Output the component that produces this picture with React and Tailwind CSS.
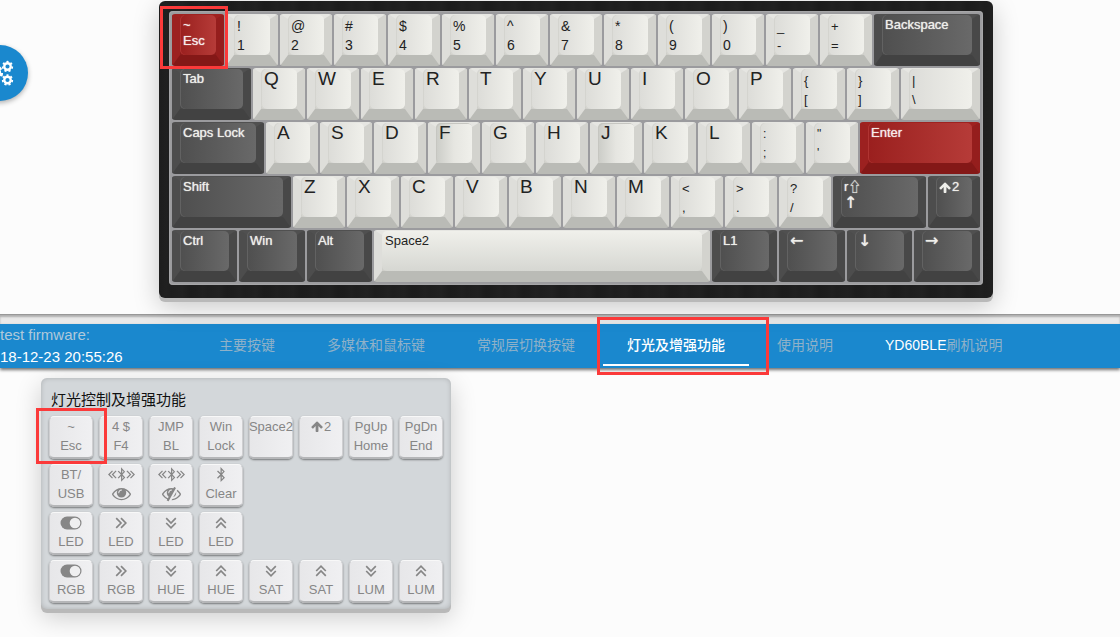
import React from "react";
import { FaBluetoothB } from "react-icons/fa";

const ARROW_UP =
  "M1611 971q0 51-37 90l-75 75q-38 38-91 38-54 0-90-38l-294-293v704q0 52-37.5 84.5t-90.5 32.5h-128q-53 0-90.5-32.5t-37.5-84.5v-704l-294 293q-36 38-90 38t-90-38l-75-75q-38-38-38-90 0-53 38-91l651-651q35-37 90-37 54 0 91 37l651 651q37 39 37 91z";
const EYE =
  "M1664 960q-152-236-381-353 61 104 61 225 0 185-131.5 316.5t-316.5 131.5-316.5-131.5-131.5-316.5q0-121 61-225-229 117-381 353 133 205 333.5 326.5t434.5 121.5 434.5-121.5 333.5-326.5zm-720-384q0-20-14-34t-34-14q-125 0-214.5 89.5t-89.5 214.5q0 20 14 34t34 14 34-14 14-34q0-86 61-147t147-61q20 0 34-14t14-34zm848 384q0 34-20 69-140 230-376.5 368.5t-499.5 138.5-499.5-139-376.5-368q-20-35-20-69t20-69q140-229 376.5-368t499.5-139 499.5 139 376.5 368q20 35 20 69z";
const EYE_OFF =
  "M555 1335l78-141q-87-63-136-159t-49-203q0-121 61-225-229 117-381 353 167 258 427 375zm389-759q0-20-14-34t-34-14q-125 0-214.5 89.5t-89.5 214.5q0 20 14 34t34 14 34-14 14-34q0-86 61-147t147-61q20 0 34-14t14-34zm363-191q0 7-1 9-106 189-316 567t-315 566l-49 89q-10 16-28 16-12 0-134-70-16-10-16-28 0-12 44-87-143-65-263.5-173t-208.5-245q-20-31-20-69t20-69q153-235 380-371t496-136q89 0 180 17l54-97q10-16 28-16 5 0 18 6t31 15.5 33 18.5 31.5 18.5 19.5 11.5q16 10 16 27zm37 447q0 139-79 253.5t-209 164.5l280-502q8 45 8 84zm448 128q0 35-20 69-39 64-109 145-150 172-347.5 267t-419.5 95l74-132q212-18 392.5-137t301.5-307q-115-179-282-294l63-112q95 64 182.5 153t144.5 182q20 34 20 69z";

function Glyph({ d, className }) {
  return (
    <svg viewBox="0 0 1792 1792" className={className} fill="currentColor" aria-hidden="true">
      <path d={d} />
    </svg>
  );
}

const CHEVRONS = {
  right: "M2 2l4 4-4 4M6 2l4 4-4 4",
  left: "M6 2L2 6l4 4M10 2L6 6l4 4",
  down: "M2 2l4 4 4-4M2 6l4 4 4-4",
  up: "M2 6l4-4 4 4M2 10l4-4 4 4",
};

function Chevrons({ dir, className = "size-3" }) {
  return (
    <svg viewBox="1 1 10 10" className={className} fill="none" stroke="currentColor" strokeWidth="1.4" aria-hidden="true">
      <path d={CHEVRONS[dir]} />
    </svg>
  );
}

function Toggle() {
  return (
    <svg viewBox="0 0 22 14" className="h-[14px] w-[22px]" aria-hidden="true">
      <rect x="0.5" y="0.5" width="21" height="13" rx="6.5" fill="currentColor" />
      <circle cx="15" cy="7" r="5.3" fill="#efeff0" />
    </svg>
  );
}

function Broadcast() {
  return (
    <span className="flex items-center justify-center">
      <Chevrons dir="left" className="size-[9px]" />
      <FaBluetoothB className="h-[15px] w-[9px]" />
      <Chevrons dir="right" className="size-[9px]" />
    </span>
  );
}

const TONES = {
  light:
    "border-t-[#e6e6e2] border-l-[#dededa] border-r-[#d3d3ce] border-b-[#babbb6] bg-[#cfcfca] text-[#222]",
  dark: "border-t-[#505050] border-l-[#4d4d4d] border-r-[#484848] border-b-[#424242] bg-[#474747] text-[#eeeeea] [text-shadow:0_0_1px_#eeeeea]",
  red: "border-t-[#9f2220] border-l-[#9c2120] border-r-[#951e1d] border-b-[#841817] bg-[#8d1b1a] text-[#f6eaea] [text-shadow:0_0_1px_#f6eaea]",
};

const FACES = {
  light: "bg-linear-to-r from-[#dcdcd8] to-[#f0f0eb] shadow-[inset_1px_0_0_#d4d4cf]",
  dish: "bg-linear-to-r from-[#cbccc7] via-[#e6e6e1] to-[#f0f0eb] shadow-[inset_1px_1px_0_#c6c6c1]",
  space: "bg-linear-to-b from-[#f0f0eb] to-[#d6d7d2]",
  dark: "bg-linear-to-r from-[#4f4f4f] to-[#696969] shadow-[inset_1px_0_0_#626262]",
  red: "bg-linear-to-r from-[#9a1f1e] to-[#b63b38] shadow-[inset_1px_0_0_#b03432]",
};

const LEGENDS = {
  letter: "text-[19px] leading-[21px]",
  pair: "pt-[3px] text-[14px] leading-[19px]",
  sign: "pt-[3px] text-[13px] leading-[19px]",
  tiny: "pt-[3px] text-[12px] leading-[19px]",
  word: "pt-[3px] text-[13px] leading-4",
};

function Marker({ className }) {
  return <span aria-hidden="true" className={`pointer-events-none absolute z-10 border-3 border-[#fb3a3a] ${className}`} />;
}

function Key({ size = "flex-[52]", tone = "light", face, kind = "word", lines, marked }) {
  return (
    <div className={`relative min-w-0 ${size}`}>
      <button
        type="button"
        className={`relative block h-[52px] w-full rounded-[3px] border-t-[5px] border-r-8 border-b-[11px] border-l-8 ${TONES[tone]}`}
      >
        <span className={`absolute inset-x-0 -top-1 bottom-0 rounded-[5px] ${FACES[face || tone]}`} />
        <span className={`absolute -top-[5px] left-[3px] flex flex-col text-left whitespace-nowrap ${LEGENDS[kind]}`}>
          {lines.map((line, i) => (
            <span key={i} className="min-h-4">{line}</span>
          ))}
        </span>
      </button>
      {marked && <Marker className="-top-2 -right-1 -bottom-[3px] -left-3" />}
    </div>
  );
}

const letters = (text) =>
  text.split("").map((c) => ({ lines: [c], kind: "letter", face: c === "F" || c === "J" ? "dish" : undefined }));
const pairs = (list, kind) => list.map((p) => ({ lines: p.split(" "), kind }));
const dark = (lines, size) => ({ lines, size, tone: "dark" });
const arrow = (char) => <span className="font-['DejaVu_Sans',sans-serif] text-[16px]">{char}</span>;

const layerTwo = (
  <span className="flex items-center">
    <Glyph d={ARROW_UP} className="size-[13px]" />2
  </span>
);

const ROWS = [
  [
    { lines: ["~", "Esc"], tone: "red", marked: true },
    ...pairs(["! 1", "@ 2", "# 3", "$ 4", "% 5", "^ 6", "& 7", "* 8", "( 9", ") 0"], "pair"),
    ...pairs(["_ -", "+ ="], "sign"),
    dark(["Backspace"], "flex-[106]"),
  ],
  [
    dark(["Tab"], "flex-[79]"),
    ...letters("QWERTYUIOP"),
    ...pairs(["{ [", "} ]"], "sign"),
    { lines: ["|", "\\"], kind: "sign", size: "flex-[79]" },
  ],
  [
    dark(["Caps Lock"], "flex-[92]"),
    ...letters("ASDFGHJKL"),
    ...pairs([": ;", "\" '"], "tiny"),
    { lines: ["Enter"], tone: "red", size: "flex-[120]" },
  ],
  [
    dark(["Shift"], "flex-[119]"),
    ...letters("ZXCVBNM"),
    ...pairs(["< ,", "> .", "? /"], "sign"),
    dark(["r⇧", arrow("↑")], "flex-[93]"),
    dark([layerTwo]),
  ],
  [
    dark(["Ctrl"], "flex-[65]"),
    dark(["Win"], "flex-[66]"),
    dark(["Alt"], "flex-[65]"),
    { lines: ["Space2"], face: "space", size: "flex-[336]" },
    dark(["L1"], "flex-[65]"),
    dark([arrow("←")], "flex-[66]"),
    dark([arrow("↓")], "flex-[65]"),
    dark([arrow("→")], "flex-[66]"),
  ],
];

function Keyboard() {
  return (
    <div className="w-full max-w-[834px] rounded-md bg-[#1e1e1e] bg-[repeating-linear-gradient(90deg,#1d1d1d_0px,#202020_7px,#1e1e1e_12px,#212121_23px,#1c1c1c_31px,#1d1d1d_37px)] px-[10px] pt-[10px] pb-[13px] shadow-[0_4px_0_#b9b9b9,0_8px_26px_rgba(0,0,0,0.22)]">
      <div className="flex flex-col gap-[2px] rounded-[4px] bg-[#9b9b9e] p-[3px] shadow-[inset_0_0_2px_#c4c4c4]">
        {ROWS.map((row, i) => (
          <div key={i} className="flex gap-[2px]">
            {row.map((k, j) => (
              <Key key={j} {...k} />
            ))}
          </div>
        ))}
      </div>
    </div>
  );
}

const TABS = [
  { label: "主要按键" },
  { label: "多媒体和鼠标键" },
  { label: "常规层切换按键" },
  { label: "灯光及增强功能", active: true },
  { label: "使用说明" },
  { lead: "YD60BLE", label: "刷机说明" },
];

function NavBar() {
  return (
    <nav className="flex items-stretch bg-[#1a88ce] shadow-[0_2px_3px_rgba(0,0,0,0.55)]">
      <div className="w-[195px] shrink-0 text-[15px] leading-[22px] whitespace-nowrap">
        <p className="text-[#b0c9da]">test firmware:</p>
        <p className="text-white">18-12-23 20:55:26</p>
      </div>
      <div className="flex gap-1 text-[14px] whitespace-nowrap">
        {TABS.map((t) => (
          <div key={t.label} className="relative flex">
            <a
              href="#"
              className={`flex items-center px-6 pb-[2px] ${t.active ? "font-medium text-white" : "text-[#8fb1c8]"}`}
            >
              {t.lead && <span className="text-white">{t.lead}</span>}
              {t.label}
            </a>
            {t.active && <span className="absolute inset-x-0 bottom-[2px] h-[2px] bg-white" />}
            {t.active && <Marker className="-top-[7px] -right-5 -bottom-[7px] -left-[6px]" />}
          </div>
        ))}
      </div>
    </nav>
  );
}

const eye = <Glyph d={EYE} className="size-[19px]" />;
const eyeOff = <Glyph d={EYE_OFF} className="size-[19px]" />;
const bluetooth = <FaBluetoothB className="h-[15px] w-3" />;
const right = <Chevrons dir="right" />;
const down = <Chevrons dir="down" />;
const up = <Chevrons dir="up" />;

const FUNCTION_ROWS = [
  [["~", "Esc"], ["4 $", "F4"], ["JMP", "BL"], ["Win", "Lock"], ["Space2"], [layerTwo], ["PgUp", "Home"], ["PgDn", "End"]],
  [["BT/", "USB"], [<Broadcast />, eye, "Bluetooth visible"], [<Broadcast />, eyeOff, "Bluetooth hidden"], [bluetooth, "Clear"]],
  [[<Toggle />, "LED"], [right, "LED"], [down, "LED"], [up, "LED"]],
  [[<Toggle />, "RGB"], [right, "RGB"], [down, "HUE"], [up, "HUE"], [down, "SAT"], [up, "SAT"], [down, "LUM"], [up, "LUM"]],
];

function FunctionPanel() {
  return (
    <section className="w-fit rounded-md bg-[#d3d7da] px-2 pt-[13px] pb-[6px] shadow-[inset_0_0_5px_rgba(0,0,0,0.18),0_4px_0_#b9b9b9,0_8px_26px_rgba(0,0,0,0.2)]">
      <h2 className="px-[2px] text-[15px] leading-[18px] text-[#111]">灯光控制及增强功能</h2>
      <div className="mt-[7px] flex flex-col gap-[5px]">
        {FUNCTION_ROWS.map((row, i) => (
          <div key={i} className="flex gap-[6px]">
            {row.map(([top, bottom, name], j) => (
              <div key={j} className="relative">
                <button
                  type="button"
                  aria-label={name}
                  className="flex h-[43px] w-11 flex-col items-center rounded-[5px] border border-b-2 border-x-[#cfcfd1] border-t-[#f8f8f8] border-b-[#b5b6b8] bg-linear-to-r from-[#e7e7e9] to-[#f0f0f2] text-[13px] leading-[19px] whitespace-nowrap text-[#868686] shadow-[0_1px_2px_rgba(0,0,0,0.45)]"
                >
                  <span className="flex h-[19px] items-center">{top}</span>
                  <span className="flex h-[19px] items-center">{bottom}</span>
                </button>
                {i === 0 && j === 0 && <Marker className="-top-2 -right-[14px] -bottom-[5px] -left-[13px]" />}
              </div>
            ))}
          </div>
        ))}
      </div>
    </section>
  );
}

function Gear({ cx, cy, r }) {
  return (
    <g fill="none" stroke="#fff">
      <circle cx={cx} cy={cy} r={r * 0.58} strokeWidth={r * 0.42} />
      <circle cx={cx} cy={cy} r={r * 0.86} strokeWidth={r * 0.3} pathLength="70" strokeDasharray="5 5" />
    </g>
  );
}

export default function App() {
  return (
    <div className="relative min-h-screen overflow-hidden bg-[#fcfcfc] font-['Liberation_Sans','Noto_Sans_CJK_SC',sans-serif]">
      <button
        type="button"
        aria-label="Settings"
        className="absolute top-[45px] -left-7 flex size-14 items-center justify-center rounded-full bg-[#1a88ce] shadow-[0_2px_5px_rgba(0,0,0,0.3)]"
      >
        <svg viewBox="0 0 28 28" className="size-7" aria-hidden="true">
          <Gear cx={8.5} cy={14} r={8.5} />
          <Gear cx={21.5} cy={7.5} r={5.6} />
          <Gear cx={21.5} cy={21} r={5.6} />
        </svg>
      </button>
      <header className="flex justify-center border-b border-[#989898] pt-px pb-4 pl-8 shadow-[0_1px_2px_rgba(0,0,0,0.35)]">
        <Keyboard />
      </header>
      <main>
        <div className="bg-[#e9e9e9] pt-[9px] shadow-[inset_0_2px_2px_rgba(0,0,0,0.25)]">
          <NavBar />
        </div>
        <div className="px-[41px] pt-[10px] pb-6">
          <FunctionPanel />
        </div>
      </main>
    </div>
  );
}
